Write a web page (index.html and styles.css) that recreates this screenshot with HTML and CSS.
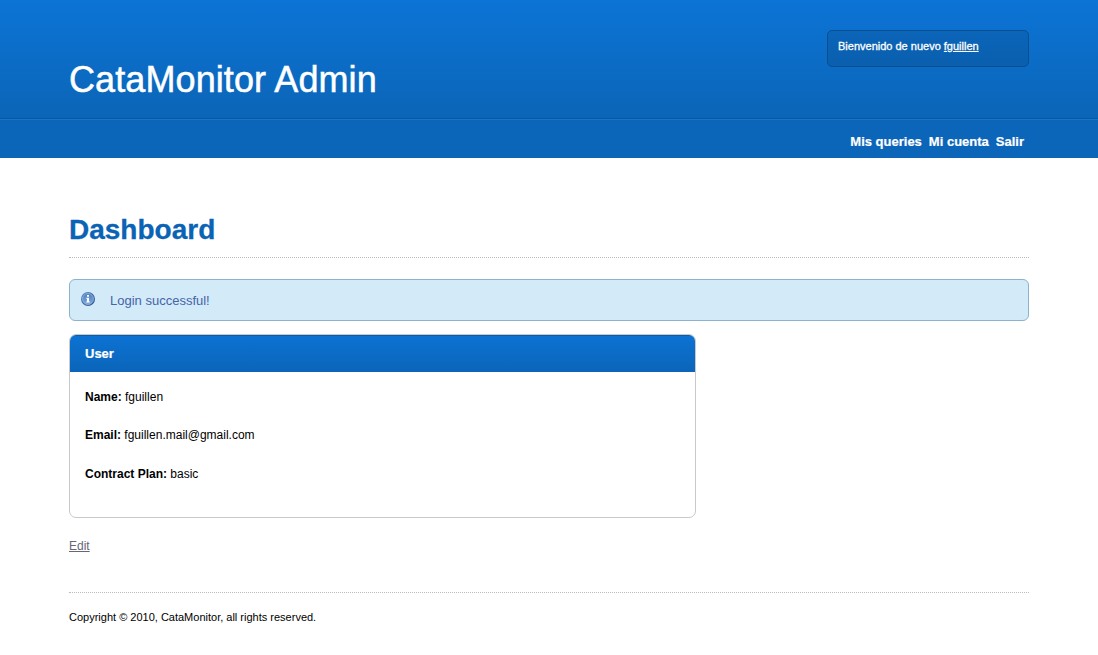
FILE: index.html
```html
<!DOCTYPE html>
<html lang="es">
<head>
<meta charset="utf-8">
<title>CataMonitor Admin</title>
<link rel="stylesheet" href="styles.css">
</head>
<body>
<header class="header">
  <div class="container masthead">
    <h1 class="site-title">CataMonitor Admin</h1>
    <div class="welcome">Bienvenido de nuevo <a href="#">fguillen</a></div>
  </div>
</header>
<nav class="nav">
  <div class="container nav-links">
    <a href="#">Mis queries</a>
    <a href="#">Mi cuenta</a>
    <a href="#">Salir</a>
  </div>
</nav>
<main class="container">
  <h2 class="page-title">Dashboard</h2>
  <div class="notice">
    <svg class="notice-icon" width="14" height="14" viewBox="0 0 14 14">
      <defs>
        <linearGradient id="ring" x1="0" y1="0" x2="1" y2="1"><stop offset="0" stop-color="#5b93cf"/><stop offset="1" stop-color="#284987"/></linearGradient>
        <linearGradient id="disc" x1="0" y1="0" x2="0" y2="1"><stop offset="0" stop-color="#4f7fbd"/><stop offset="1" stop-color="#7aaade"/></linearGradient>
      </defs>
      <circle cx="7" cy="7" r="7" fill="url(#ring)"/>
      <circle cx="7" cy="7" r="5.500" fill="url(#disc)" stroke="#a9c6e6" stroke-width=".6"/>
      <path d="M6 3h2v1.700H6zM5.300 5.700H8V9.500h.8v1H5.200v-1H6V6.700h-.7z" fill="#fff"/>
    </svg>
    <span class="notice-text">Login successful!</span>
  </div>
  <section class="card">
    <h3 class="card-title">User</h3>
    <div class="card-body">
      <p><b>Name:</b> fguillen</p>
      <p><b>Email:</b> fguillen.mail@gmail.com</p>
      <p><b>Contract Plan:</b> basic</p>
    </div>
  </section>
  <a class="edit" href="#">Edit</a>
  <footer class="footer">Copyright © 2010, CataMonitor, all rights reserved.</footer>
</main>
</body>
</html>
```
FILE: styles.css
```css
* { box-sizing: border-box; }
body {
  margin: 0;
  background: #fff;
  color: #000;
  font: 12px/18px "Liberation Sans", Arial, sans-serif;
}
h1, h2, h3, p { margin: 0; }
.container { width: 960px; margin: 0 auto; }
.header {
  height: 119px;
  background: linear-gradient(#0c74d6, #0b65b7);
  border-bottom: 1px solid #0a589f;
}
.masthead { display: flex; justify-content: space-between; align-items: flex-start; padding-top: 30px; }
.site-title {
  margin-top: 29px;
  font-size: 36px;
  font-weight: 400;
  line-height: 42px;
  letter-spacing: .1px;
  color: #fff;
  -webkit-text-stroke: .5px #fff;
}
.welcome {
  width: 202px;
  height: 37px;
  padding: 6px 10px;
  border: 1px solid #084f90;
  border-radius: 5px;
  background: linear-gradient(#0b65b9, #0a5fae);
  color: #fff;
  font-size: 11px;
  -webkit-text-stroke: .3px #fff;
}
.welcome a { color: #fff; }
.nav { height: 39px; background: #0b65b9; border-top: 1px solid #1576d0; }
.nav-links { display: flex; justify-content: flex-end; gap: 7px; padding: 13px 5px 0 0; }
.nav-links a { color: #fff; font-size: 13px; font-weight: 700; text-decoration: none; -webkit-text-stroke: .2px #fff; }
.page-title {
  height: 100px;
  padding-top: 54px;
  border-bottom: 1px dotted #bbb;
  color: #0b63b5;
  font-size: 28px;
  line-height: 36px;
  -webkit-text-stroke: .3px #0b63b5;
}
.notice {
  display: flex;
  align-items: center;
  gap: 15px;
  height: 42px;
  margin-top: 21px;
  padding: 0 11px;
  border: 1px solid #8db2cf;
  border-radius: 6px;
  background: #d3eaf8;
  color: #4465a8;
  font-size: 13px;
}
.notice-icon { margin-top: -2px; }
.notice-text { padding-top: 2px; }
.card {
  width: 627px;
  height: 184px;
  margin-top: 13px;
  border: 1px solid #c9c9c9;
  border-radius: 7px;
  overflow: hidden;
}
.card-title {
  height: 37px;
  padding: 9px 15px 0;
  border-top: 1px solid #0b5cab;
  background: linear-gradient(#0c72d3, #0b65b9);
  color: #fff;
  font-size: 13px;
  line-height: 18px;
  -webkit-text-stroke: .2px #fff;
}
.card-body { padding: 16px 15px; }
.card-body p { margin-bottom: 20px; }
.card-body p:nth-child(2) { margin-bottom: 21px; }
.edit { display: block; width: max-content; margin-top: 19px; color: #666677; }
.footer { margin-top: 37px; padding-top: 15px; border-top: 1px dotted #bbb; font-size: 11px; }
```
